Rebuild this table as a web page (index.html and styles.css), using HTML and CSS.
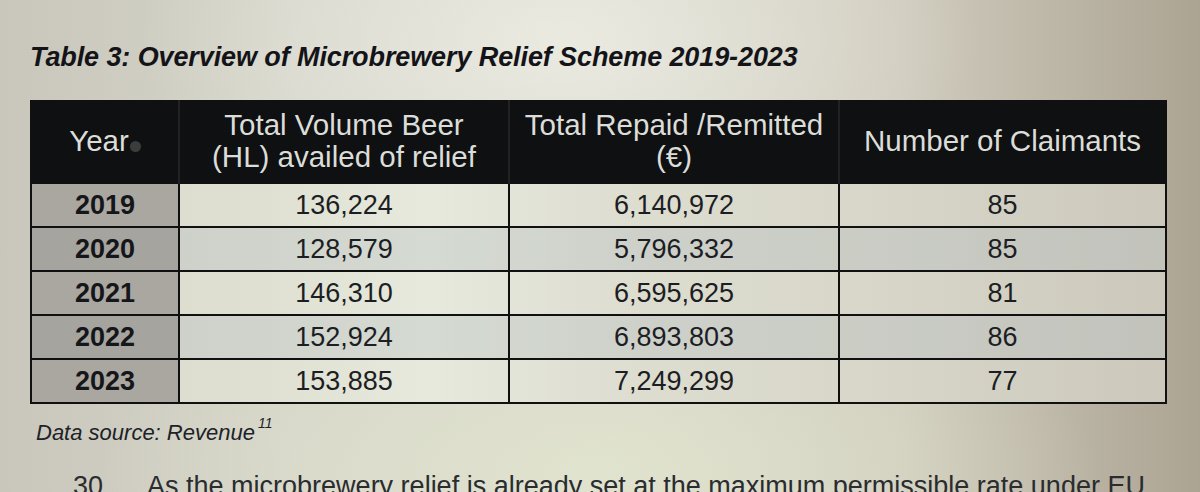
FILE: index.html
```html
<!DOCTYPE html>
<html lang="en">
<head>
<meta charset="utf-8">
<title>Table 3: Overview of Microbrewery Relief Scheme 2019-2023</title>
<link rel="stylesheet" href="styles.css">
</head>
<body>
<div class="page">
  <h1 class="caption">Table 3: Overview of Microbrewery Relief Scheme 2019-2023</h1>
  <table class="relief">
    <colgroup>
      <col class="c-year"><col class="c-vol"><col class="c-rep"><col class="c-num">
    </colgroup>
    <thead>
      <tr>
        <th>Year<span class="dot"></span></th>
        <th>Total Volume Beer<br>(HL) availed of relief</th>
        <th>Total Repaid /Remitted<br>(€)</th>
        <th>Number of Claimants</th>
      </tr>
    </thead>
    <tbody>
      <tr class="odd"><td class="yr">2019</td><td>136,224</td><td>6,140,972</td><td>85</td></tr>
      <tr class="even"><td class="yr">2020</td><td>128,579</td><td>5,796,332</td><td>85</td></tr>
      <tr class="odd"><td class="yr">2021</td><td>146,310</td><td>6,595,625</td><td>81</td></tr>
      <tr class="even"><td class="yr">2022</td><td>152,924</td><td>6,893,803</td><td>86</td></tr>
      <tr class="odd"><td class="yr">2023</td><td>153,885</td><td>7,249,299</td><td>77</td></tr>
    </tbody>
  </table>
  <p class="source">Data source: Revenue<sup>11</sup></p>
  <p class="para"><span class="num">30</span><span>As the microbrewery relief is already set at the maximum permissible rate under EU</span></p>
</div>
</body>
</html>
```

FILE: styles.css
```css
* { box-sizing: border-box; }
html, body {
  margin: 0;
  padding: 0;
  width: 1200px;
  height: 492px;
  overflow: hidden;
}
body {
  font-family: "Liberation Sans", Arial, sans-serif;
  background:
    radial-gradient(ellipse 420px 220px at 560px 40px, rgba(240,240,232,0.75), rgba(240,240,232,0) 100%),
    radial-gradient(ellipse 500px 200px at 600px 470px, rgba(226,230,206,0.8), rgba(226,230,206,0) 100%),
    linear-gradient(90deg, #c9c7bb 0%, #d6d5ca 25%, #d9d8cc 50%, #cfcbbd 75%, #aca493 100%);
}
.page {
  padding: 41px 0 0 30px;
}
.caption {
  margin: 0;
  font-size: 27px;
  line-height: 32px;
  font-weight: bold;
  font-style: italic;
  color: #141418;
  letter-spacing: -0.1px;
}
.relief {
  margin-top: 27px;
  width: 1135px;
  border-collapse: collapse;
  table-layout: fixed;
  border: 2px solid #101010;
  background: linear-gradient(90deg, #d9d8cc 0%, #dfe0d2 20%, #e6e9dc 35%, #dcdccf 55%, #d7d6c9 75%, #ccc9bc 100%);
}
.c-year { width: 148px; }
.c-vol { width: 330px; }
.c-rep { width: 330px; }
.c-num { width: 327px; }
.relief thead th {
  height: 82px;
  background: #0e1011;
  color: #dcddd8;
  font-weight: normal;
  font-size: 29.5px;
  line-height: 32px;
  text-align: center;
  vertical-align: middle;
  padding: 0 2px 2px;
  border-left: 2px solid #222;
  white-space: nowrap;
}
.relief thead th:first-child { border-left: none; }
.dot {
  display: inline-block;
  width: 11px;
  height: 11px;
  border-radius: 50%;
  background: #3a3d3c;
  vertical-align: -1px;
  margin-left: 1px;
}
.relief td {
  height: 44px;
  padding: 0;
  text-align: center;
  vertical-align: middle;
  font-size: 27px;
  color: #1c1e24;
  border: 2px solid #101010;
}
.relief td.yr {
  background: #a9a79f;
  font-weight: bold;
  color: #15161a;
}
.relief tr.even td { background-color: rgba(170,180,185,0.28); }
.relief tr.even td.yr { background: #a5a49e; }
.source {
  margin: 6px 0 0 6px;
  font-size: 22px;
  font-style: italic;
  color: #202228;
  line-height: 26px;
}
.source sup {
  font-size: 14px;
  vertical-align: 12px;
  margin-left: 3px;
}
.para {
  margin: 24px 0 0 43px;
  display: flex;
  gap: 44px;
  font-size: 27px;
  line-height: 32px;
  color: #2a2c30;
  white-space: nowrap;
}
```
